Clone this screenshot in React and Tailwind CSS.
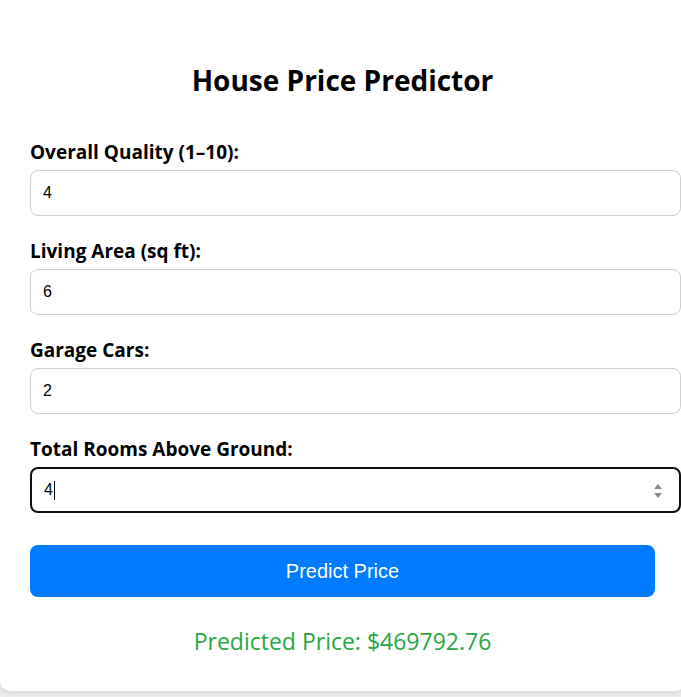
const FIELDS = [
  { label: "Overall Quality (1–10):", value: "4" },
  { label: "Living Area (sq ft):", value: "6" },
  { label: "Garage Cars:", value: "2" },
];

function Field({ label, value, focused }) {
  return (
    <div className="mb-[23px]">
      <div className="text-[19px] leading-[24px] font-bold text-black mb-[6px]">{label}</div>
      {focused ? (
        <div className="relative flex items-center h-[46px] w-[651px] rounded-[8px] border-2 border-[#111] px-[12px] bg-white">
          <span className="text-[16px] font-['Liberation_Sans',Arial,sans-serif] text-black">{value}</span>
          <span className="w-px h-[19px] bg-black ml-px" />
          <svg className="absolute right-[16px] top-[13px]" width="10" height="18" viewBox="0 0 10 18">
            <path d="M5 2 L9 7 L1 7 Z" fill="#8a8a8a" />
            <path d="M1 11 L9 11 L5 16 Z" fill="#8a8a8a" />
          </svg>
        </div>
      ) : (
        <div className="flex items-center h-[46px] w-[651px] rounded-[8px] border border-[#cfcfcf] px-[12px] bg-white">
          <span className="text-[16px] font-['Liberation_Sans',Arial,sans-serif] text-black">{value}</span>
        </div>
      )}
    </div>
  );
}

export default function App() {
  return (
    <div className="min-h-[697px] bg-[#efefef] font-['Open_Sans',sans-serif] overflow-hidden">
      <div className="w-[685px] bg-white rounded-b-[10px] shadow-[0_2px_6px_rgba(0,0,0,0.12)] px-[30px] pt-[62px] pb-[34px]">
        <h1 className="text-[28px] leading-[36px] font-bold text-center text-black mb-[42px]">
          House Price Predictor
        </h1>
        {FIELDS.map((f) => (
          <Field key={f.label} label={f.label} value={f.value} />
        ))}
        <Field label="Total Rooms Above Ground:" value="4" focused />
        <button className="mt-[9px] w-[625px] h-[52px] rounded-[8px] bg-[#007bff] text-white text-[20px] font-['Liberation_Sans',Arial,sans-serif]">
          Predict Price
        </button>
        <div className="mt-[28px] text-center text-[23px] leading-[32px] text-[#28a745]">
          Predicted Price: $469792.76
        </div>
      </div>
    </div>
  );
}
